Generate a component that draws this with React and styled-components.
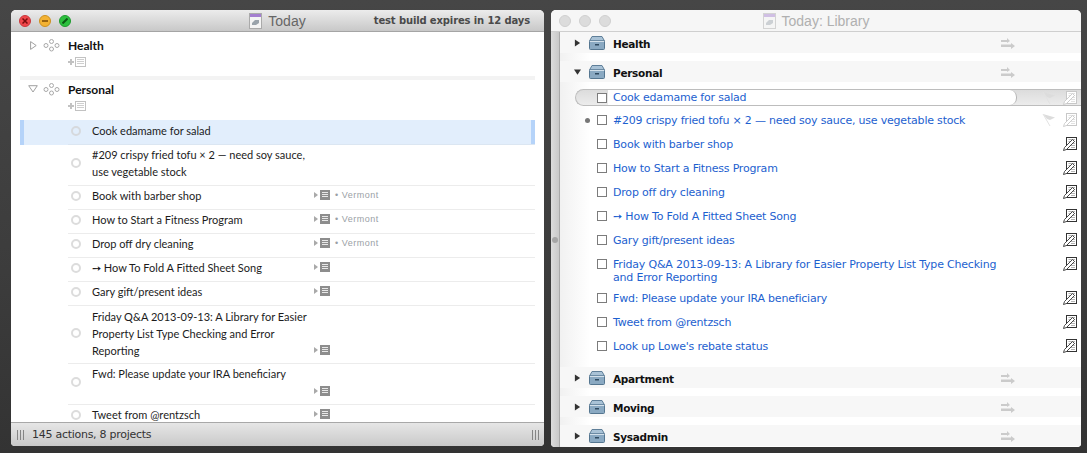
import styled, { createGlobalStyle } from "styled-components";

const Global = createGlobalStyle`
  html, body { margin: 0; padding: 0; }
  body {
    width: 1087px;
    height: 453px;
    overflow: hidden;
    background: linear-gradient(#464646, #3c3c3c 60%, #333);
  }
`;

const Desktop = styled.div`
  display: flex;
  gap: 7px;
  padding: 10px 6px 0 11px;
  height: 453px;
  box-sizing: border-box;
`;

const Window = styled.div`
  display: flex;
  flex-direction: column;
  width: ${(p) => p.$w}px;
  height: ${(p) => p.$h}px;
  border-radius: 5px 5px 4px 4px;
  overflow: hidden;
  background: #fff;
`;

const TitleBar = styled.div`
  flex: none;
  height: 22px;
  box-sizing: border-box;
  display: grid;
  grid-template-columns: 1fr auto 1fr;
  align-items: center;
  padding: 0 8px;
  background: ${(p) => (p.$active ? "linear-gradient(#ececec, #c8c8c8)" : "#f6f6f6")};
  border-bottom: 1px solid ${(p) => (p.$active ? "#a5a5a5" : "#cfcfcf")};
`;

const Lights = styled.div`
  display: flex;
  gap: 8px;
`;

const Light = styled.span`
  width: 12px;
  height: 12px;
  border-radius: 50%;
  box-sizing: border-box;
  display: flex;
  align-items: center;
  justify-content: center;
  background: ${(p) => p.$c};
  border: 1px solid ${(p) => p.$b};
`;

const Title = styled.div`
  display: flex;
  align-items: center;
  gap: 6px;
  font: 14px "Liberation Sans", sans-serif;
  color: ${(p) => (p.$active ? "#666" : "#b0b0b0")};
`;

const Expires = styled.div`
  justify-self: end;
  font: bold 10px "DejaVu Sans", sans-serif;
  letter-spacing: -0.13px;
  color: #4a4a4a;
  padding-right: 6px;
`;

const OutlineBody = styled.div`
  flex: 1;
  min-height: 0;
  overflow: hidden;
  padding: 0 9px;
`;

const Project = styled.div`
  display: grid;
  grid-template-columns: 48px 1fr;
  height: ${(p) => p.$h}px;
  border-bottom: ${(p) => (p.$band ? "4px solid #f3f3f3" : "none")};
`;

const ProjectIcons = styled.div`
  display: flex;
  align-items: flex-start;
  justify-content: flex-end;
  gap: 6px;
  padding: ${(p) => p.$top + 1}px 8px 0 0;
`;

const ProjectMain = styled.div`
  display: flex;
  flex-direction: column;
  padding-top: ${(p) => p.$top}px;
`;

const ProjectName = styled.div`
  font: 700 12px/16px Lato, sans-serif;
  color: #111;
`;

const AddRow = styled.div`
  display: flex;
  margin-top: 3px;
`;

const Disclosure = styled.svg`
  flex: none;
  margin-top: 2px;
  margin-right: ${(p) => p.$mr || 0}px;
`;

const Action = styled.div`
  display: grid;
  grid-template-columns: 48px 24px 220px 1fr;
  align-items: stretch;
  height: ${(p) => p.$h}px;
  box-sizing: border-box;
  background: ${(p) => (p.$selected ? "#e2eefc" : "transparent")};
  box-shadow: ${(p) => (p.$selected ? "inset 4px 0 #b5d3f9, inset -4px 0 #b5d3f9" : "none")};
`;

const ActionCell = styled.div`
  display: flex;
  align-items: center;
  border-bottom: 1px solid ${(p) => (p.$selected ? "#dbe6f2" : "#ececec")};
`;

const Spacer = styled.div``;

const CheckCell = styled(ActionCell)`
  padding: 0 0 ${(p) => (p.$selected ? 2 : 4)}px 3px;
`;

const Ring = styled.span`
  width: 10px;
  height: 10px;
  border-radius: 50%;
  box-sizing: border-box;
  border: 2px solid ${(p) => (p.$selected ? "#d6d9dd" : "#dcdcdc")};
`;

const ActionText = styled(ActionCell)`
  align-items: ${(p) => (p.$high ? "flex-start" : "center")};
  padding-top: ${(p) => p.$top}px;
  padding-bottom: ${(p) => (p.$high ? 0 : p.$selected ? 3 : 5)}px;
  font: 11px/17px Lato, sans-serif;
  color: #1c1c1c;
`;

const Meta = styled(ActionCell)`
  align-items: ${(p) => (p.$end ? "flex-end" : "center")};
  padding: 0 0 ${(p) => (p.$end ? 8 : 5)}px 2px;
  gap: 3px;
`;

const Context = styled.span`
  font: 9px "Liberation Sans", sans-serif;
  color: #9a9fa6;
  margin-left: 2px;
  letter-spacing: 0.5px;
`;

const NoteBlock = styled.span`
  display: inline-flex;
  align-items: center;
  gap: 2px;
`;

const StatusBar = styled.div`
  flex: none;
  height: 24px;
  display: flex;
  align-items: center;
  justify-content: space-between;
  padding: 0 4px 0 6px;
  box-sizing: border-box;
  background: linear-gradient(#e6e6e6, #c9c9c9);
  border-top: 1px solid #a8a8a8;
  font: 11px "DejaVu Sans", sans-serif;
  letter-spacing: -0.27px;
  color: #333;
`;

const StatusLeft = styled.div`
  display: flex;
  align-items: center;
  gap: 7px;
`;

const Grip = styled.span`
  width: 8px;
  height: 10px;
  background: repeating-linear-gradient(90deg, #858585 0 1px, transparent 1px 3px);
`;

const LibraryBody = styled.div`
  flex: 1;
  min-height: 0;
  display: flex;
  overflow: hidden;
`;

const Splitter = styled.div`
  flex: none;
  width: 8px;
  display: flex;
  align-items: center;
  justify-content: flex-start;
  background: linear-gradient(90deg, #dcdcdc, #c9c9c9);
  border-right: 1px solid #a9a9a9;
`;

const Knob = styled.span`
  width: 6px;
  height: 6px;
  margin-left: 1px;
  border-radius: 50%;
  background: #a5a5a5;
`;

const LibraryList = styled.div`
  flex: 1;
  min-width: 0;
  overflow: hidden;
  background: linear-gradient(90deg, #f1f1f1, #fff 30px);
`;

const Group = styled.div`
  display: flex;
  align-items: center;
  height: 21px;
  box-sizing: border-box;
  padding: 1px 0 0 14px;
  margin-bottom: 8px;
  background: #f7f7f7;
`;

const GroupName = styled.span`
  flex: 1;
  font: bold 10.5px "DejaVu Sans", sans-serif;
  letter-spacing: -0.3px;
  color: #111;
  margin: 2px 0 0 8px;
`;

const GroupTri = styled.svg`
  flex: none;
  margin-right: 8px;
`;

const GroupArrows = styled.span`
  display: flex;
  width: 80px;
`;

const Items = styled.div`
  margin-top: -1px;
  margin-bottom: 9px;
`;

const Item = styled.div`
  display: flex;
  align-items: ${(p) => (p.$high ? "flex-start" : "center")};
  height: ${(p) => p.$h || 24}px;
  padding-right: 4px;
  box-sizing: border-box;
`;

const SelectedItem = styled.div`
  display: flex;
  align-items: center;
  height: 17px;
  margin: 0 0 2px 15px;
  padding-right: 4px;
  border: 1px solid #bdbdbd;
  border-right: none;
  border-radius: 9px 0 0 9px;
  box-sizing: border-box;
  background: linear-gradient(#dcdcdc, #ececec);
`;

const Dot = styled.span`
  flex: none;
  width: 5px;
  height: 5px;
  border-radius: 50%;
  margin-left: 25px;
  background: #777;
`;

const Box = styled.span`
  flex: none;
  width: 8px;
  height: 8px;
  border: 1px solid #7c7c7c;
  background: #fff;
  margin-left: ${(p) => p.$ml}px;
  margin-top: ${(p) => (p.$high ? 7 : 0)}px;
`;

const ItemText = styled.span`
  flex: none;
  width: 400px;
  margin-left: 6px;
  font: 11px/13px "DejaVu Sans", sans-serif;
  letter-spacing: -0.2px;
  color: #1d5fcf;
  padding-top: ${(p) => (p.$high ? 6 : 0)}px;
`;

const EditField = styled.span`
  flex: none;
  width: 403px;
  height: 15px;
  margin-left: 1px;
  padding-left: 5px;
  border-radius: 0 7px 7px 0;
  background: #fff;
  border-right: 1px solid #b5b5b5;
  font: 11px/15px "DejaVu Sans", sans-serif;
  letter-spacing: -0.2px;
  color: #1d5fcf;
`;

const Trail = styled.span`
  margin-left: auto;
  display: flex;
  align-items: center;
  gap: 7px;
  margin-top: ${(p) => (p.$high ? 5 : 0)}px;
`;

const FadedSvg = styled.svg`
  opacity: ${(p) => (p.$faded ? 0.45 : 1)};
`;

const DocIcon = ({ faded }) => (
  <FadedSvg $faded={faded} width="13" height="16" viewBox="0 0 13 16">
    <rect x="0.5" y="0.5" width="12" height="15" fill="#f4f4f4" stroke="#aaa" />
    <rect x="1" y="1" width="11" height="3" fill="#a47ed0" />
    <path d="M3 10 L6 7 L10 7 L10 10 L7 12 L3 12 Z" fill="#9aa3ab" />
  </FadedSvg>
);

const NodesIcon = () => (
  <svg width="17" height="13" viewBox="0 0 17 13" fill="none" stroke="#a8a8a8" strokeWidth="1">
    <circle cx="3" cy="6.5" r="2" />
    <circle cx="8.5" cy="2.5" r="2" />
    <circle cx="8.5" cy="10" r="2" />
    <circle cx="14" cy="6.5" r="2" />
  </svg>
);

const TriOpen = () => (
  <Disclosure $mr={-1} width="10" height="8" viewBox="0 0 10 8">
    <path d="M0.7 0.7 H9.3 L5 7 Z" fill="none" stroke="#a0a0a0" />
  </Disclosure>
);

const TriClosed = () => (
  <Disclosure width="7" height="9" viewBox="0 0 7 9">
    <path d="M0.6 0.6 L6.2 4.5 L0.6 8.4 Z" fill="none" stroke="#a0a0a0" />
  </Disclosure>
);

const AddNote = () => (
  <svg width="18" height="10" viewBox="0 0 18 10">
    <path d="M0 5 H6 M3 2 V8" stroke="#c2c2c2" strokeWidth="2" />
    <rect x="7.5" y="0.5" width="10" height="9" fill="#fff" stroke="#c2c2c2" />
    <path d="M9 2.5 H16 M9 4.5 H16 M9 6.5 H16" stroke="#cfcfcf" />
  </svg>
);

const NoteIcon = () => (
  <NoteBlock>
    <svg width="4" height="6" viewBox="0 0 4 6"><path d="M0 0 L4 3 L0 6 Z" fill="#a9a9a9" /></svg>
    <svg width="10" height="10" viewBox="0 0 10 10">
      <rect width="10" height="10" fill="#8d8d8d" />
      <path d="M2 2.5 H8 M2 4.5 H8 M2 6.5 H8" stroke="#e8e8e8" />
    </svg>
  </NoteBlock>
);

const Drawer = () => (
  <svg width="16" height="14" viewBox="0 0 16 14">
    <path d="M3 0.5 H13 L15.5 5 H0.5 Z" fill="#a9c2d6" stroke="#5f7f99" />
    <rect x="0.5" y="5" width="15" height="8.5" rx="1" fill="#8aa9c2" stroke="#557690" />
    <path d="M1 5.5 H15" stroke="#d3e0ea" />
    <rect x="6" y="8" width="4" height="1.5" fill="#2f4a60" />
  </svg>
);

const Arrows = () => (
  <svg width="14" height="11" viewBox="0 0 14 11" fill="#cbcbcb">
    <path d="M0 2 H6 V0 L9 3 L6 5 V4 H0 Z" />
    <path d="M0 6.5 H10 V5 L14 8 L10 11 V9 H0 Z" />
  </svg>
);

const Flag = () => (
  <svg width="14" height="14" viewBox="0 0 14 14">
    <path d="M1 1 L13 4.5 L8 7 L5 6 Z" fill="#dcdcdc" />
    <path d="M1 1 L8 13" stroke="#e2e2e2" />
  </svg>
);

const NoteEdit = ({ faded }) => {
  const c = faded ? "#c8c8c8" : "#333";
  return (
    <svg width="14" height="14" viewBox="0 0 14 14" fill="none">
      <rect x="3.5" y="0.5" width="10" height="12" fill="#fff" stroke={c} />
      <path d="M5.5 2.5 H12 M5.5 4.5 H12 M5.5 6.5 H12 M8 8.5 H12 M8 10.5 H12" stroke={faded ? "#e2e2e2" : "#b5b5b5"} />
      <path d="M0.5 13.5 L1.5 10.5 L9.5 2.5 L11.5 4.5 L3.5 12.5 Z" fill="#fff" stroke={c} strokeWidth="0.9" />
    </svg>
  );
};

const left = [
  { t: "Cook edamame for salad", h: 25, selected: true, plain: true },
  { t: "#209 crispy fried tofu × 2 — need soy sauce, use vegetable stock", h: 41, plain: true, wrap: true, top: 1 },
  { t: "Book with barber shop", h: 24, ctx: true },
  { t: "How to Start a Fitness Program", h: 24, ctx: true },
  { t: "Drop off dry cleaning", h: 24, ctx: true },
  { t: "➙ How To Fold A Fitted Sheet Song", h: 24 },
  { t: "Gary gift/present ideas", h: 24 },
  { t: "Friday Q&A 2013-09-13: A Library for Easier Property List Type Checking and Error Reporting", h: 58, end: true, wrap: true, top: 2 },
  { t: "Fwd: Please update your IRA beneficiary", h: 41, end: true, wrap: true, top: 1 },
  { t: "Tweet from @rentzsch", h: 24 },
];

const right = [
  { t: "#209 crispy fried tofu × 2 — need soy sauce, use vegetable stock", dot: true, faded: true },
  { t: "Book with barber shop" },
  { t: "How to Start a Fitness Program" },
  { t: "Drop off dry cleaning" },
  { t: "➙ How To Fold A Fitted Sheet Song" },
  { t: "Gary gift/present ideas" },
  { t: "Friday Q&A 2013-09-13: A Library for Easier Property List Type Checking and Error Reporting", h: 34, high: true },
  { t: "Fwd: Please update your IRA beneficiary" },
  { t: "Tweet from @rentzsch" },
  { t: "Look up Lowe's rebate status" },
];

const LibraryGroup = ({ name, open }) => (
  <Group>
    <GroupTri width="7" height="8" viewBox="0 0 8 8">
      <path d={open ? "M0 1 H8 L4 7 Z" : "M1 0 L7 4 L1 8 Z"} fill="#333" />
    </GroupTri>
    <Drawer />
    <GroupName>{name}</GroupName>
    <GroupArrows><Arrows /></GroupArrows>
  </Group>
);

export default function App() {
  return (
    <>
      <Global />
      <Desktop>
        <Window $w={533} $h={436}>
          <TitleBar $active>
            <Lights>
              <Light $c="#f0474b" $b="#c8383c">
                <svg width="6" height="6" viewBox="0 0 6 6"><path d="M0.5 0.5 L5.5 5.5 M5.5 0.5 L0.5 5.5" stroke="#7a0b0d" strokeWidth="1.5" /></svg>
              </Light>
              <Light $c="#f3b233" $b="#cc8f1f">
                <svg width="6" height="6" viewBox="0 0 6 6"><path d="M0 3 H6" stroke="#7c4a05" strokeWidth="1.5" /></svg>
              </Light>
              <Light $c="#2cc03e" $b="#1f9a2f">
                <svg width="6" height="6" viewBox="0 0 6 6"><path d="M0.5 5.5 L5.5 0.5" stroke="#0b5a15" strokeWidth="2" /></svg>
              </Light>
            </Lights>
            <Title $active><DocIcon />Today</Title>
            <Expires>test build expires in 12 days</Expires>
          </TitleBar>
          <OutlineBody>
            <Project $h={44} $band>
              <ProjectIcons $top={6}><TriClosed /><NodesIcon /></ProjectIcons>
              <ProjectMain $top={6}>
                <ProjectName>Health</ProjectName>
                <AddRow><AddNote /></AddRow>
              </ProjectMain>
            </Project>
            <Project $h={40}>
              <ProjectIcons $top={2}><TriOpen /><NodesIcon /></ProjectIcons>
              <ProjectMain $top={2}>
                <ProjectName>Personal</ProjectName>
                <AddRow><AddNote /></AddRow>
              </ProjectMain>
            </Project>
            {left.map((a) => (
              <Action key={a.t} $h={a.h} $selected={a.selected}>
                <Spacer />
                <CheckCell $selected={a.selected}><Ring $selected={a.selected} /></CheckCell>
                <ActionText $selected={a.selected} $high={a.wrap} $top={a.top || 0}>{a.t}</ActionText>
                <Meta $selected={a.selected} $end={a.end}>
                  {!a.plain && <NoteIcon />}
                  {a.ctx && <Context>• Vermont</Context>}
                </Meta>
              </Action>
            ))}
          </OutlineBody>
          <StatusBar>
            <StatusLeft><Grip />145 actions, 8 projects</StatusLeft>
            <Grip />
          </StatusBar>
        </Window>
        <Window $w={530} $h={437}>
          <TitleBar>
            <Lights>
              <Light $c="#dcdcdc" $b="#cfcfcf" />
              <Light $c="#dcdcdc" $b="#cfcfcf" />
              <Light $c="#dcdcdc" $b="#cfcfcf" />
            </Lights>
            <Title><DocIcon faded />Today: Library</Title>
          </TitleBar>
          <LibraryBody>
            <Splitter><Knob /></Splitter>
            <LibraryList>
              <LibraryGroup name="Health" />
              <LibraryGroup name="Personal" open />
              <Items>
                <SelectedItem>
                  <Box $ml={21} />
                  <EditField>Cook edamame for salad</EditField>
                  <Trail><Flag /><NoteEdit faded /></Trail>
                </SelectedItem>
                {right.map((r) => (
                  <Item key={r.t} $h={r.h} $high={r.high}>
                    {r.dot && <Dot />}
                    <Box $ml={r.dot ? 7 : 37} $high={r.high} />
                    <ItemText $high={r.high}>{r.t}</ItemText>
                    <Trail $high={r.high}>
                      {r.faded && <Flag />}
                      <NoteEdit faded={r.faded} />
                    </Trail>
                  </Item>
                ))}
              </Items>
              <LibraryGroup name="Apartment" />
              <LibraryGroup name="Moving" />
              <LibraryGroup name="Sysadmin" />
            </LibraryList>
          </LibraryBody>
        </Window>
      </Desktop>
    </>
  );
}
